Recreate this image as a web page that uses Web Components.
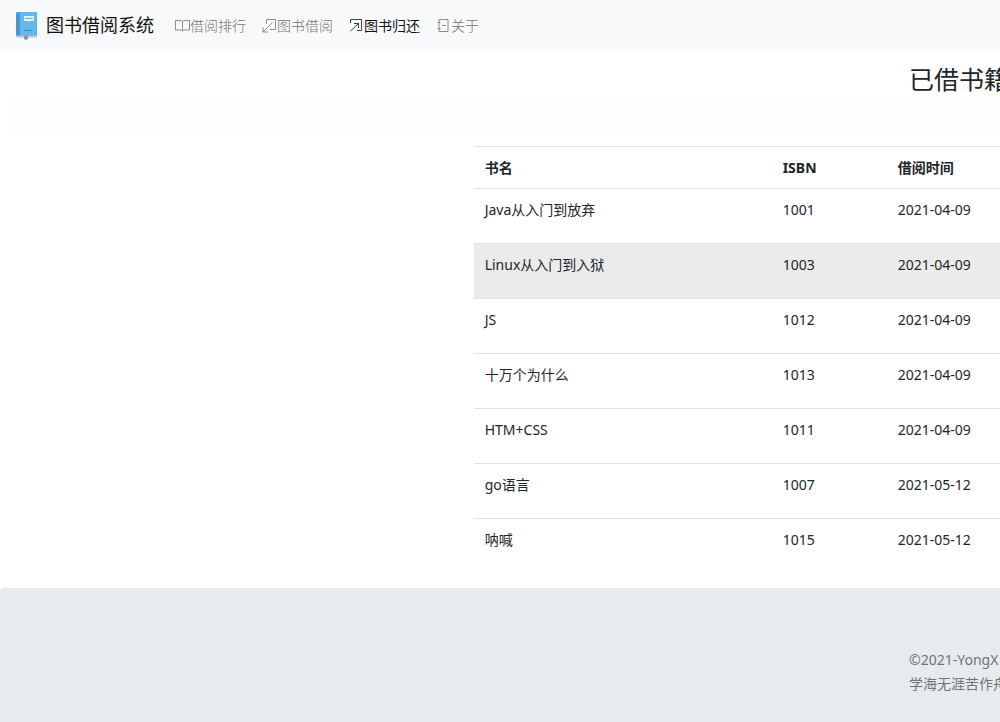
<!DOCTYPE html>
<html lang="zh-CN">
<head>
<meta charset="utf-8">
<meta name="viewport" content="width=device-width, initial-scale=1">
<title>图书借阅系统</title>
<style>
body{margin:0;background:#fff;color:#212529;font:14px/21px "Noto Sans","Noto Sans CJK SC",sans-serif}
</style>
</head>
<body>
<library-app></library-app>
<script>
class BaseElement extends HTMLElement{
  render(html){this.attachShadow({mode:"open"}).innerHTML=html}
}

const ICONS={
  book:'<path d="M.5 2.500h5.500l1.500 1 1.500-1h5.500v9.500H9l-1.500 1-1.500-1H.5zM7.500 3.500v9"/>',
  borrow:'<path d="M4.500 6V1.500h9v10H8M10.500 4.500l-9.500 9.500M1 9.500V14h5"/>',
  giveback:'<path d="M1.500 5V1.500h11v11H8M1.500 13l8-7.500M5 5.500h4.500V10"/>',
  about:'<path d="M3 1.500h9v12H3zM1.500 4.500h3M1.500 10.500h3M6 7.500h4"/>'
};

customElements.define("nav-item",class extends BaseElement{
  connectedCallback(){
    this.render(`<style>
      :host{display:block}
      a{display:flex;align-items:center;color:#707274;text-decoration:none;font-weight:300;white-space:nowrap}
      :host([active]) a{color:#111;font-weight:400}
      svg{width:15px;height:15px;fill:none;stroke:currentColor;stroke-width:.8}
    </style><a href="#"><svg viewBox="0 0 15 15" aria-hidden="true">${ICONS[this.getAttribute("icon")]}</svg><slot></slot></a>`);
  }
});

customElements.define("site-nav",class extends BaseElement{
  connectedCallback(){
    this.render(`<style>
      :host{display:block;background:#f8f9fa}
      nav{display:flex;align-items:center;min-height:49px;padding:0 14px}
      .brand{display:flex;align-items:center;gap:6px;margin-right:21px;color:#111;font-size:18px;line-height:28px;text-decoration:none;white-space:nowrap}
      .brand svg{width:26px;height:30px}
      .links{display:flex;gap:16px;padding-top:2px}
    </style>
    <nav><a class="brand" href="#"><svg viewBox="0 0 26 30" aria-hidden="true">
      <path fill="#ccd5dc" d="M3 24h20v4H5q-2 0-2-2z"/>
      <path fill="#67b8ea" d="M2 4q0-2 2-2h19v24H5q-1 0-1 1-2 0-2-2z"/>
      <path fill="#4998d6" d="M2 4q0-2 2-2h2v23H2z"/>
      <path fill="#5caae2" d="M22 2h1v23h-1z"/>
      <path fill="#e2f1fa" d="M10 6h10v5H10z"/>
      <path stroke="#71aed8" d="M11 8.500h8"/>
      <path stroke="#388dca" d="M10 20.500h8"/>
      <path fill="#8396a8" d="M10 26h4v3l-2 1-2-1z"/>
    </svg><span>图书借阅系统</span></a><div class="links"><slot></slot></div></nav>`);
  }
});

customElements.define("page-title",class extends BaseElement{
  connectedCallback(){
    this.render(`<style>
      :host{display:block}
      .row{display:grid;grid-template-columns:minmax(0,10fr) minmax(0,1fr);padding:14px 0 4px}
      h1{grid-column:2;margin:0;font-size:25px;line-height:33px;font-weight:400;white-space:nowrap}
      .band{height:32px;margin-left:14px;background:#fdfdfd}
    </style><div class="row"><h1><slot></slot></h1></div><div class="band"></div>`);
  }
});

const LOANS=[
  ["Java从入门到放弃","1001","2021-04-09"],
  ["Linux从入门到入狱","1003","2021-04-09"],
  ["JS","1012","2021-04-09"],
  ["十万个为什么","1013","2021-04-09"],
  ["HTM+CSS","1011","2021-04-09"],
  ["go语言","1007","2021-05-12"],
  ["呐喊","1015","2021-05-12"]
];

customElements.define("loan-table",class extends BaseElement{
  connectedCallback(){
    this.render(`<style>
      :host{display:grid;grid-template-columns:minmax(0,9fr) minmax(0,10fr);padding:14px 0 15px}
      table{grid-column:2;width:100%;border-collapse:separate;border-spacing:0;table-layout:fixed}
      .name{width:298px}.isbn{width:115px}
      th,td{box-sizing:border-box;border-top:1px solid #dee2e6;padding:10px 11px;text-align:left;vertical-align:top;white-space:nowrap}
      th{font-weight:700}
      td{height:55px}
      .current td{background:#ebebeb}
    </style><table><thead><tr><th class="name" scope="col">书名</th><th class="isbn" scope="col">ISBN</th><th scope="col">借阅时间</th></tr></thead>
    <tbody>${LOANS.map((r,i)=>`<tr${i===1?' class="current"':''}>${r.map(c=>`<td>${c}</td>`).join("")}</tr>`).join("")}</tbody></table>`);
  }
});

customElements.define("site-footer",class extends BaseElement{
  connectedCallback(){
    this.render(`<style>
      :host{display:grid;grid-template-columns:minmax(0,10fr) minmax(0,1fr);align-content:start;padding:60px 0 24px;background:#e7ebee;border-radius:4px 0 0 0;color:#6c757d;line-height:24px}
      div{grid-column:2;white-space:nowrap}
      ::slotted(p){margin:0}
    </style><div><slot></slot></div>`);
  }
});

customElements.define("library-app",class extends BaseElement{
  connectedCallback(){
    this.render(`<style>
      :host{display:flex;flex-direction:column;min-height:100vh;overflow:hidden}
      site-footer{flex:1}
    </style>
    <site-nav>
      <nav-item icon="book">借阅排行</nav-item>
      <nav-item icon="borrow">图书借阅</nav-item>
      <nav-item icon="giveback" active>图书归还</nav-item>
      <nav-item icon="about">关于</nav-item>
    </site-nav>
    <main><page-title>已借书籍</page-title><loan-table></loan-table></main>
    <site-footer><p>©2021-YongX</p><p>学海无涯苦作舟</p></site-footer>`);
  }
});
</script>
</body>
</html>
